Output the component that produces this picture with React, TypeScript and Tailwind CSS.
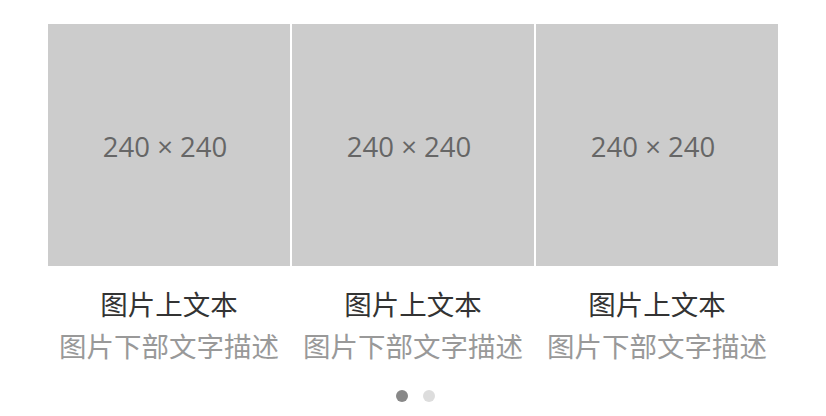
import React from "react";

const items = [0, 1, 2];

export default function App() {
  return (
    <div className="w-[826px] h-[416px] bg-white pt-[24px] pl-[48px]" style={{ fontFamily: '"Noto Sans", "Noto Sans CJK SC", sans-serif' }}>
      <div className="flex gap-[2px]">
        {items.map((i) => (
          <div key={i} className="w-[242px] flex flex-col items-center">
            <div className="w-[242px] h-[242px] bg-[#cccccc] flex items-center justify-center">
              <span className="text-[27.5px] text-[#666666] pr-[8px] pt-[3px]" style={{ fontFamily: '"Open Sans", sans-serif' }}>240 × 240</span>
            </div>
            <div className="mt-[18px] h-[42px] leading-[42px] text-[27.5px] text-[#333333]">图片上文本</div>
            <div className="h-[42px] leading-[42px] text-[27.5px] text-[#999999]">图片下部文字描述</div>
          </div>
        ))}
      </div>
      <div className="flex justify-center gap-[15px] mt-[22px] pr-[44px]">
        <div className="w-[12px] h-[12px] rounded-full bg-[#888888]" />
        <div className="w-[12px] h-[12px] rounded-full bg-[#dddddd]" />
      </div>
    </div>
  );
}
